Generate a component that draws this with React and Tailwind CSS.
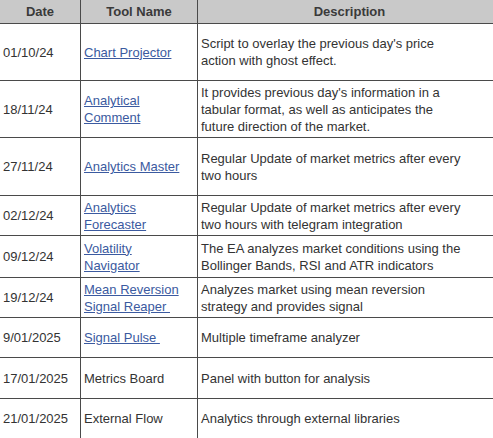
import React from "react";

// rows of the tools table, heights taken from the original page
const tools = [
    { date: "01/10/24", name: ["Chart Projector"], link: true, desc: ["Script to overlay the previous day's price", "action with ghost effect."], h: "h-[57px]" },
    { date: "18/11/24", name: ["Analytical", "Comment"], link: true, desc: ["It provides previous day's information in a", "tabular format, as well as anticipates the", "future direction of the market."], h: "h-[57px]" },
    { date: "27/11/24", name: ["Analytics Master"], link: true, desc: ["Regular Update of market metrics after every", "two hours"], h: "h-[58px]" },
    { date: "02/12/24", name: ["Analytics", "Forecaster"], link: true, desc: ["Regular Update of market metrics after every", "two hours with telegram integration"], h: "h-[40px]" },
    { date: "09/12/24", name: ["Volatility", "Navigator"], link: true, desc: ["The EA analyzes market conditions using the", "Bollinger Bands, RSI and ATR indicators"], h: "h-[42px]" },
    { date: "19/12/24", name: ["Mean Reversion", "Signal Reaper\u00a0"], link: true, desc: ["Analyzes market using mean reversion", "strategy and provides signal"], h: "h-[40px]" },
    { date: "9/01/2025", name: ["Signal Pulse\u00a0"], link: true, desc: ["Multiple timeframe analyzer"], h: "h-[40px]" },
    { date: "17/01/2025", name: ["Metrics Board"], link: false, desc: ["Panel with button for analysis"], h: "h-[41px]" },
    { date: "21/01/2025", name: ["External Flow"], link: false, desc: ["Analytics through external libraries"], h: "h-[40px]" },
];

const Lines = ({ lines }) =>
    lines.map((l, i) => (
        <React.Fragment key={i}>
            {i > 0 && <br />}
            {l}
        </React.Fragment>
    ));

export default function App() {
    return (
        <div
            className="w-[493px] h-[438px] overflow-hidden bg-white text-[13px] leading-[17px] text-[#333]"
            style={{ fontFamily: "'Liberation Sans', Arial, sans-serif" }}
        >
            <div className="flex h-[24px] border-b border-[#4a4a4a] bg-[#c9c9c9] font-bold text-[#3a3a3a]">
                <div className="w-[81px] shrink-0 border-r border-[#4a4a4a] flex items-center justify-center">Date</div>
                <div className="w-[117px] shrink-0 border-r border-[#4a4a4a] flex items-center justify-center">Tool Name</div>
                <div className="flex-1 flex items-center justify-center pl-[8px]">Description</div>
            </div>
            {tools.map((t) => (
                <div key={t.date} className={`flex ${t.h} border-b border-[#4a4a4a]`}>
                    <div className="w-[81px] shrink-0 border-r border-[#4a4a4a] flex items-center pl-[3px]">{t.date}</div>
                    <div className="w-[117px] shrink-0 border-r border-[#4a4a4a] flex items-center pl-[3px]">
                        {t.link ? (
                            <a href="#" className="text-[#3b5aa0] underline">
                                <Lines lines={t.name} />
                            </a>
                        ) : (
                            <span>
                                <Lines lines={t.name} />
                            </span>
                        )}
                    </div>
                    <div className="flex-1 flex items-center pl-[3px] whitespace-nowrap">
                        <span>
                            <Lines lines={t.desc} />
                        </span>
                    </div>
                </div>
            ))}
        </div>
    );
}
